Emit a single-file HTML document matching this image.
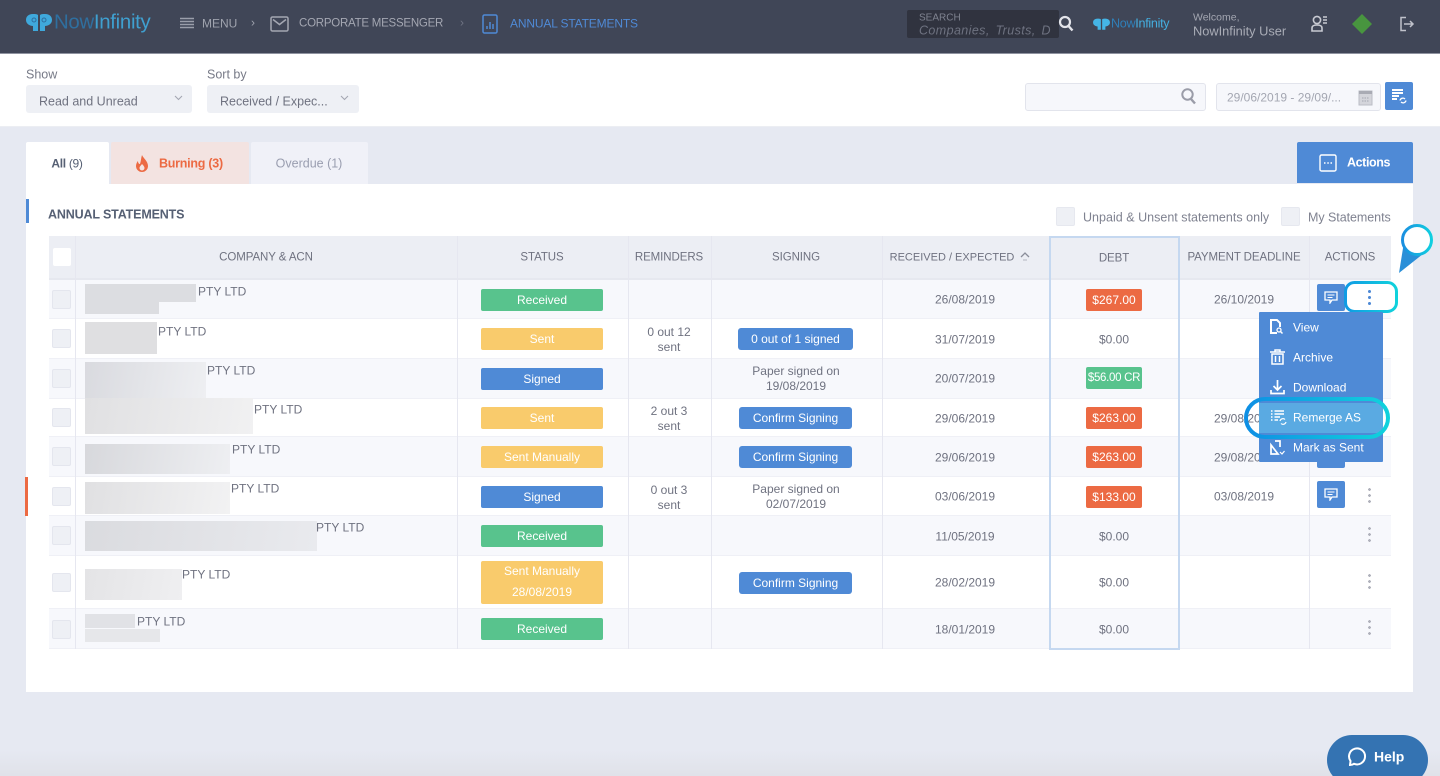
<!DOCTYPE html>
<html><head><meta charset="utf-8"><title>Annual Statements</title>
<style>
html,body{margin:0;padding:0}
body{width:1440px;height:776px;overflow:hidden;background:#e6e9f2;font-family:"Liberation Sans",sans-serif;font-size:12px;color:#6f7280;position:relative}
#w{position:absolute;left:0;top:0;width:1440px;height:776px;overflow:hidden;filter:blur(.35px)}
#w div,#w span,#w svg{position:absolute}
.c{transform:translate(-50%,calc(-50% + 2px));white-space:nowrap;text-align:center;line-height:15px}
.l{transform:translateY(calc(-50% + 2px));white-space:nowrap;line-height:15px}
.r{left:49px;width:1342px;border-bottom:1px solid #eff0f6}
.v{top:236px;width:1px;height:413px;background:#e6e7f0}
.cb{left:52px;width:19px;height:19px;background:#eef0f5;border:1px solid #e4e6ee;border-radius:2px;box-sizing:border-box}
.b{left:481px;width:122px;height:22px;border-radius:2px;color:#fff;line-height:22px;text-align:center;font-size:12px}
.g{background:#58c38d}.y{background:#f9cb6c}.bl{background:#4f8ad6}.re{background:#ec6a43}
.s{height:22px;background:#4f8ad6;border-radius:3px;color:#fff;text-align:center;line-height:22px;font-size:12px}
.d{left:1086px;width:56px;height:22px;border-radius:2px;color:#fff;text-align:center;line-height:22px;font-size:12px;white-space:nowrap}
.h{font-size:11.5px;color:#6f7280;letter-spacing:-.08px}
.cm{left:1317px;width:28px;height:27px;background:#4f8ad6;border-radius:2px}
.dots{width:3px;height:15px;background:radial-gradient(circle at 1.5px 1.5px,#b0b2bc 1.3px,transparent 1.5px) 0 0/3px 6px repeat-y}
.mi{color:#fff;font-size:12px;left:1293px}
</style></head><body><div id="w">

<!-- top bar -->
<div style="left:0;top:0;width:1440px;height:53px;background:#404657;border-bottom:1px solid #8f93a0"></div>
<svg style="left:26px;top:13px" width="26" height="20" viewBox="0 0 26 20"><path d="M7 1C2 1 0 4 0 7c0 4 4 6 7 6v5h5V2C11 1 9 1 7 1zM19 1c5 0 7 3 7 6 0 4-4 6-7 6v5h-5V2c1-1 3-1 5-1z" fill="#3fa9dc"/><circle cx="8" cy="7" r="2" fill="none" stroke="#2f6f9f"/><circle cx="18" cy="7" r="2" fill="none" stroke="#2f6f9f"/></svg>
<div class="l" style="left:54px;top:21px;font-size:20.4px;color:#2f6f9f;letter-spacing:-.3px">Now<span style="position:static;color:#3fa0d0">Infinity</span></div>
<svg style="left:180px;top:17px" width="14" height="13"><path d="M0 1.5h14M0 4.5h14M0 7.5h14M0 10.5h14" stroke="#9a9eaa" stroke-width="1.4"/></svg>
<div class="l" style="left:202px;top:22px;color:#9fa3ae;font-size:12px">MENU</div>
<div class="c" style="left:253px;top:21px;color:#9fa3ae;font-size:12px">›</div>
<svg style="left:270px;top:16px" width="19" height="16" viewBox="0 0 19 16"><rect x="1" y="1" width="17" height="14" rx="1.5" fill="none" stroke="#a4a7b2" stroke-width="1.5"/><path d="M3 3.5l6.5 5 6.5-5" fill="none" stroke="#a4a7b2" stroke-width="1.5"/></svg>
<div class="l" style="left:299px;top:22px;color:#a4a7b2;font-size:11.5px;letter-spacing:-.24px">CORPORATE MESSENGER</div>
<div class="c" style="left:462px;top:21px;color:#6f7484;font-size:12px">›</div>
<svg style="left:482px;top:14px" width="16" height="20" viewBox="0 0 16 20"><rect x="1" y="1" width="14" height="18" rx="1.5" fill="none" stroke="#4f8ad6" stroke-width="1.5"/><path d="M5 15v-3M8 15V8M11 15v-5" stroke="#4f8ad6" stroke-width="1.5"/></svg>
<div class="l" style="left:510px;top:22px;color:#4f8ad6;font-size:12px;letter-spacing:-.15px">ANNUAL STATEMENTS</div>

<div style="left:907px;top:10px;width:152px;height:28px;background:#30333f;border-radius:2px"></div>
<div class="l" style="left:919px;top:16px;font-size:10px;color:#7f8390">SEARCH</div>
<div class="l" style="left:919px;top:29px;font-size:12.5px;font-style:italic;color:#6e7280;letter-spacing:.4px;word-spacing:2px;width:132px;overflow:hidden">Companies, Trusts, D</div>
<svg style="left:1058px;top:15px" width="16" height="17" viewBox="0 0 16 17"><circle cx="7" cy="7" r="5" fill="none" stroke="#e3e4ea" stroke-width="2.2"/><path d="M10.5 11l4 4.5" stroke="#e3e4ea" stroke-width="2.4"/></svg>
<svg style="left:1093px;top:18px" width="17" height="13" viewBox="0 0 26 20"><path d="M7 1C2 1 0 4 0 7c0 4 4 6 7 6v5h5V2C11 1 9 1 7 1zM19 1c5 0 7 3 7 6 0 4-4 6-7 6v5h-5V2c1-1 3-1 5-1z" fill="#45b5e6"/></svg>
<div class="l" style="left:1111px;top:22px;font-size:12.6px;color:#2f7fb8;letter-spacing:-.3px">Now<span style="position:static;color:#44aee0">Infinity</span></div>
<div class="l" style="left:1193px;top:16px;font-size:10.5px;color:#a4a7b2">Welcome,</div>
<div class="l" style="left:1193px;top:29px;font-size:12.8px;color:#a9acb6">NowInfinity User</div>
<svg style="left:1311px;top:14px" width="17" height="19" viewBox="0 0 17 19"><circle cx="6" cy="6" r="3.6" fill="none" stroke="#c8cad2" stroke-width="1.6"/><path d="M1 17v-3c0-2 2-3 5-3s5 1 5 3v3z" fill="none" stroke="#c8cad2" stroke-width="1.6"/><path d="M12 3h4M12 6h4M12 9h4" stroke="#c8cad2" stroke-width="1.5"/></svg>
<div style="left:1352px;top:14px;width:20px;height:20px;background:#48953f;clip-path:polygon(50% 0,100% 50%,50% 100%,0 50%)"></div>
<svg style="left:1399px;top:16px" width="16" height="16" viewBox="0 0 16 16"><path d="M7 1.5H2v13h5" fill="none" stroke="#c0c2cb" stroke-width="1.5"/><path d="M5 8h9M11 5l3 3-3 3" fill="none" stroke="#c0c2cb" stroke-width="1.5"/></svg>

<!-- filter bar -->
<div style="left:0;top:54px;width:1440px;height:72px;background:#fff;border-bottom:1px solid #eceef3"></div>
<div class="l" style="left:26px;top:73px;font-size:12.5px;color:#777a87">Show</div>
<div class="l" style="left:207px;top:73px;font-size:12.5px;color:#777a87">Sort by</div>
<div style="left:26px;top:85px;width:166px;height:28px;background:#eef0f5;border-radius:3px"></div>
<div class="l" style="left:39px;top:100px;font-size:12.5px;color:#6f7280">Read and Unread</div>
<svg style="left:174px;top:95px" width="9" height="6"><path d="M1 1l3.5 3.500L8 1" fill="none" stroke="#a4a7b2" stroke-width="1.100"/></svg>
<div style="left:207px;top:85px;width:152px;height:28px;background:#eef0f5;border-radius:3px"></div>
<div class="l" style="left:220px;top:100px;font-size:12.5px;color:#6f7280">Received / Expec...</div>
<svg style="left:340px;top:95px" width="9" height="6"><path d="M1 1l3.5 3.500L8 1" fill="none" stroke="#a4a7b2" stroke-width="1.100"/></svg>

<div style="left:1025px;top:83px;width:181px;height:28px;background:#f6f7fb;border:1px solid #e2e4ec;border-radius:3px;box-sizing:border-box"></div>
<svg style="left:1180px;top:87px" width="17" height="18" viewBox="0 0 17 18"><circle cx="7.500" cy="7.500" r="5.200" fill="none" stroke="#9a9ca8" stroke-width="2"/><path d="M11 12l4 4.500" stroke="#9a9ca8" stroke-width="2.400"/></svg>
<div style="left:1216px;top:83px;width:165px;height:28px;background:#f6f7fb;border:1px solid #e2e4ec;border-radius:3px;box-sizing:border-box"></div>
<div class="l" style="left:1227px;top:96px;font-size:12px;color:#a4a7b2">29/06/2019 - 29/09/...</div>
<svg style="left:1358px;top:90px" width="15" height="16" viewBox="0 0 15 16"><rect x="1" y="1" width="13" height="14" fill="#d4d5db" stroke="#bbbdc6"/><rect x="1" y="1" width="13" height="3" fill="#a9abb4"/><path d="M4 8h7M4 11h7" stroke="#a4a6b0" stroke-dasharray="1.500 1"/></svg>
<div style="left:1385px;top:82px;width:28px;height:28px;background:#4f8ad6;border-radius:2px"></div>
<svg style="left:1391px;top:88px" width="17" height="17" viewBox="0 0 17 17"><path d="M1 2h11M1 5h11M1 8h7M1 11h5" stroke="#fff" stroke-width="2"/><path d="M9 12.500a3 3 0 0 1 5-1.500M15 12.500a3 3 0 0 1-5 1.500" fill="none" stroke="#fff" stroke-width="1.300"/></svg>

<!-- card -->
<div style="left:26px;top:184px;width:1387px;height:508px;background:#fff"></div>
<div style="left:26px;top:142px;width:83px;height:43px;background:#fff;border-radius:2px 2px 0 0"></div>
<div class="c" style="left:67px;top:162px;font-size:12px;color:#566074;font-weight:bold;letter-spacing:-.3px">All <span style="position:static;font-weight:normal">(9)</span></div>
<div style="left:111px;top:142px;width:138px;height:42px;background:#f3e3e1;border-radius:2px 2px 0 0"></div>
<svg style="left:135px;top:155px" width="14" height="17" viewBox="0 0 14 17"><path d="M7 0c1 3 6 6 6 11a6 6 0 0 1-12 0c0-2 1-4 2-5 0 2 1 3 2 3C6 6 6 3 7 0z" fill="#ec6a43"/><path d="M7 9c1 1 2.500 2.500 2.500 4a2.500 2.500 0 0 1-5 0c0-1.500 1.500-2.500 2.500-4z" fill="#f3e3e1"/></svg>
<div class="l" style="left:159px;top:162px;font-size:12.5px;color:#ec6a43;font-weight:bold;letter-spacing:-.25px">Burning (3)</div>
<div style="left:251px;top:142px;width:117px;height:42px;background:#f0f1f8;border-radius:2px 2px 0 0"></div>
<div class="c" style="left:309px;top:162px;font-size:12.5px;color:#9a9eb0">Overdue (1)</div>
<div style="left:1297px;top:142px;width:116px;height:41px;background:#4f8ad6;border-radius:2px 2px 0 0"></div>
<svg style="left:1319px;top:154px" width="18" height="18"><rect x="1" y="1" width="16" height="16" rx="1.500" fill="none" stroke="#fff" stroke-width="1.400"/><path d="M5 9h1.500M8.300 9h1.500M11.500 9H13" stroke="#fff" stroke-width="1.400"/></svg>
<div class="l" style="left:1347px;top:161px;font-size:12.500px;color:#fff;font-weight:bold;letter-spacing:-.4px">Actions</div>

<div style="left:26px;top:199px;width:3px;height:24px;background:#4f8ad6"></div>
<div class="l" style="left:48px;top:213px;font-size:12.500px;font-weight:bold;color:#566074;letter-spacing:-.15px">ANNUAL STATEMENTS</div>
<div style="left:1056px;top:207px;width:19px;height:19px;background:#eef0f5;border:1px solid #e6e8ef;box-sizing:border-box;border-radius:2px"></div>
<div class="l" style="left:1083px;top:216px;font-size:12.500px;color:#7f8290;letter-spacing:.02px">Unpaid &amp; Unsent statements only</div>
<div style="left:1281px;top:207px;width:19px;height:19px;background:#eef0f5;border:1px solid #e6e8ef;box-sizing:border-box;border-radius:2px"></div>
<div class="l" style="left:1308px;top:216px;font-size:12.500px;color:#7f8290;letter-spacing:-.05px">My Statements</div>

<!-- table bg -->
<div class="r" style="top:236px;height:42px;background:#eceef4;border-bottom:2px solid #e6e8ef"></div>
<div class="r" style="top:280px;height:38px;background:#f7f8fc"></div>
<div class="r" style="top:319px;height:39px;background:#fff"></div>
<div class="r" style="top:359px;height:39px;background:#f7f8fc"></div>
<div class="r" style="top:399px;height:37px;background:#fff"></div>
<div class="r" style="top:437px;height:39px;background:#f7f8fc"></div>
<div class="r" style="top:477px;height:38px;background:#fff"></div>
<div class="r" style="top:516px;height:39px;background:#f7f8fc"></div>
<div class="r" style="top:556px;height:52px;background:#fff"></div>
<div class="r" style="top:609px;height:39px;background:#f7f8fc"></div>
<div class="v" style="left:75px"></div><div class="v" style="left:457px"></div><div class="v" style="left:628px"></div><div class="v" style="left:711px"></div><div class="v" style="left:882px"></div><div class="v" style="left:1309px"></div>
<div style="left:1049px;top:236px;width:131px;height:414px;border:2px solid #c5d8f0;box-sizing:border-box"></div>

<!-- headers -->
<div class="c h" style="left:266px;top:256px">COMPANY &amp; ACN</div>
<div class="c h" style="left:542px;top:256px">STATUS</div>
<div class="c h" style="left:669px;top:256px">REMINDERS</div>
<div class="c h" style="left:796px;top:256px">SIGNING</div>
<div class="c h" style="left:952px;top:256px;font-size:11px;letter-spacing:0">RECEIVED / EXPECTED</div>
<svg style="left:1020px;top:252px" width="10" height="9"><path d="M1 5l4-4 4 4" fill="none" stroke="#8a8d9a" stroke-width="1.300"/><path d="M3 8h4" stroke="#b5b7c0"/></svg>
<div class="c h" style="left:1114px;top:257px">DEBT</div>
<div class="c h" style="left:1244px;top:256px">PAYMENT DEADLINE</div>
<div class="c h" style="left:1350px;top:256px">ACTIONS</div>

<div style="left:53px;top:248px;width:18px;height:18px;background:#fff;border-radius:2px"></div>
<div class="cb" style="top:290px"></div><div class="cb" style="top:329px"></div><div class="cb" style="top:369px"></div><div class="cb" style="top:408px"></div><div class="cb" style="top:447px"></div><div class="cb" style="top:487px"></div><div class="cb" style="top:526px"></div><div class="cb" style="top:573px"></div><div class="cb" style="top:620px"></div>

<div style="left:25px;top:477px;width:3px;height:39px;background:#ec6a43"></div>

<!-- redacted blocks -->
<div style="left:85px;top:284px;width:111px;height:18px;background:#dcdde1"></div>
<div style="left:85px;top:302px;width:74px;height:12px;background:#dcdde1"></div>
<div style="left:85px;top:322px;width:72px;height:32px;background:#dfdfe1"></div>
<div style="left:85px;top:362px;width:121px;height:36px;background:linear-gradient(100deg,#d9dadf,#eeeff2)"></div>
<div style="left:85px;top:398px;width:168px;height:36px;background:linear-gradient(100deg,#e0e0e2,#f1f1f2)"></div>
<div style="left:85px;top:444px;width:145px;height:30px;background:linear-gradient(100deg,#d7d8dc,#eeeff2)"></div>
<div style="left:85px;top:482px;width:145px;height:32px;background:linear-gradient(100deg,#e0e0e2,#f2f2f3)"></div>
<div style="left:85px;top:521px;width:232px;height:30px;background:linear-gradient(100deg,#dadbdf,#e9eaee)"></div>
<div style="left:85px;top:569px;width:97px;height:31px;background:linear-gradient(100deg,#e4e4e6,#efeff1)"></div>
<div style="left:85px;top:614px;width:50px;height:14px;background:#e1e2e6"></div>
<div style="left:85px;top:629px;width:75px;height:13px;background:#e6e7ea"></div>

<div class="l" style="left:198px;top:290px">PTY LTD</div>
<div class="l" style="left:158px;top:330px">PTY LTD</div>
<div class="l" style="left:207px;top:369px">PTY LTD</div>
<div class="l" style="left:254px;top:408px">PTY LTD</div>
<div class="l" style="left:232px;top:448px">PTY LTD</div>
<div class="l" style="left:231px;top:487px">PTY LTD</div>
<div class="l" style="left:316px;top:526px">PTY LTD</div>
<div class="l" style="left:182px;top:573px">PTY LTD</div>
<div class="l" style="left:137px;top:620px">PTY LTD</div>

<!-- status -->
<div class="b g" style="top:289px">Received</div>
<div class="b y" style="top:328px">Sent</div>
<div class="b bl" style="top:368px">Signed</div>
<div class="b y" style="top:407px">Sent</div>
<div class="b y" style="top:446px">Sent Manually</div>
<div class="b bl" style="top:486px">Signed</div>
<div class="b g" style="top:525px">Received</div>
<div class="b y" style="top:561px;height:43px;line-height:21px">Sent Manually<br>28/08/2019</div>
<div class="b g" style="top:618px">Received</div>

<!-- reminders -->
<div class="c" style="left:669px;top:338px">0 out 12<br>sent</div>
<div class="c" style="left:669px;top:417px">2 out 3<br>sent</div>
<div class="c" style="left:669px;top:496px">0 out 3<br>sent</div>

<!-- signing -->
<div class="s" style="left:738px;top:328px;width:115px">0 out of 1 signed</div>
<div class="c" style="left:796px;top:377px">Paper signed on<br>19/08/2019</div>
<div class="s" style="left:739px;top:407px;width:113px">Confirm Signing</div>
<div class="s" style="left:739px;top:446px;width:113px">Confirm Signing</div>
<div class="c" style="left:796px;top:495px">Paper signed on<br>02/07/2019</div>
<div class="s" style="left:739px;top:572px;width:113px">Confirm Signing</div>

<!-- dates -->
<div class="c" style="left:965px;top:298px">26/08/2019</div>
<div class="c" style="left:965px;top:338px">31/07/2019</div>
<div class="c" style="left:965px;top:377px">20/07/2019</div>
<div class="c" style="left:965px;top:417px">29/06/2019</div>
<div class="c" style="left:965px;top:456px">29/06/2019</div>
<div class="c" style="left:965px;top:495px">03/06/2019</div>
<div class="c" style="left:965px;top:535px">11/05/2019</div>
<div class="c" style="left:965px;top:581px">28/02/2019</div>
<div class="c" style="left:965px;top:628px">18/01/2019</div>

<!-- debt -->
<div class="d re" style="top:289px">$267.00</div>
<div class="c" style="left:1114px;top:338px">$0.00</div>
<div class="d g" style="top:367px;font-size:11.5px;letter-spacing:-.3px">$56.00 CR</div>
<div class="d re" style="top:407px">$263.00</div>
<div class="d re" style="top:446px">$263.00</div>
<div class="d re" style="top:486px">$133.00</div>
<div class="c" style="left:1114px;top:535px">$0.00</div>
<div class="c" style="left:1114px;top:581px">$0.00</div>
<div class="c" style="left:1114px;top:628px">$0.00</div>

<!-- deadline -->
<div class="c" style="left:1244px;top:298px">26/10/2019</div>
<div class="c" style="left:1244px;top:417px">29/08/2019</div>
<div class="c" style="left:1244px;top:456px">29/08/2019</div>
<div class="c" style="left:1244px;top:495px">03/08/2019</div>

<!-- actions -->
<div class="cm" style="top:284px"></div>
<svg style="left:1324px;top:291px" width="14" height="13" viewBox="0 0 14 13"><path d="M1 1h12v8H8l-2 3V9H1z" fill="none" stroke="#fff" stroke-width="1.300"/><path d="M3.500 4h7M3.500 6.500h5" stroke="#fff"/></svg>
<div class="cm" style="top:440px;height:28px"></div>
<div class="cm" style="top:481px"></div>
<svg style="left:1324px;top:488px" width="14" height="13" viewBox="0 0 14 13"><path d="M1 1h12v8H8l-2 3V9H1z" fill="none" stroke="#fff" stroke-width="1.300"/><path d="M3.500 4h7M3.500 6.500h5" stroke="#fff"/></svg>
<div class="dots" style="left:1368px;top:488px"></div>
<div class="dots" style="left:1368px;top:527px"></div>
<div class="dots" style="left:1368px;top:574px"></div>
<div class="dots" style="left:1368px;top:620px"></div>

<!-- highlighted kebab -->
<svg style="left:1343px;top:280px" width="56" height="34" viewBox="0 0 56 34"><defs><linearGradient id="k" x1="0" y1="0" x2="1" y2="0"><stop offset="0" stop-color="#109be4"/><stop offset="1" stop-color="#10d2dc"/></linearGradient></defs><rect x="2.500" y="2.500" width="51" height="29" rx="9" fill="#fff" stroke="url(#k)" stroke-width="3"/></svg>
<div class="dots" style="left:1368px;top:290px;background-image:radial-gradient(circle at 1.500px 1.500px,#4f8ad6 1.400px,transparent 1.600px)"></div>

<!-- menu -->
<div style="left:1259px;top:312px;width:124px;height:150px;background:#4f8ad6;border-radius:1px"></div>
<div style="left:1259px;top:403px;width:124px;height:30px;background:#5aaae2"></div>
<svg style="left:1269px;top:319px" width="15" height="16" viewBox="0 0 15 16"><path d="M8 14H2V1h6l3 3v4" fill="none" stroke="#fff" stroke-width="2"/><circle cx="10" cy="11" r="2" fill="none" stroke="#fff" stroke-width="1.300"/><path d="M11.500 12.500l2 2" stroke="#fff" stroke-width="1.500"/></svg>
<div class="l mi" style="top:326px">View</div>
<svg style="left:1270px;top:349px" width="15" height="16" viewBox="0 0 15 16"><path d="M0 3h15M5 3V1h5v2" fill="none" stroke="#fff" stroke-width="1.500"/><path d="M2 5h11v10H2zM5.500 7v6M9.500 7v6" fill="none" stroke="#fff" stroke-width="1.500"/></svg>
<div class="l mi" style="top:356px">Archive</div>
<svg style="left:1270px;top:379px" width="15" height="16" viewBox="0 0 15 16"><path d="M7.500 1v9M3.500 7l4 4 4-4" fill="none" stroke="#fff" stroke-width="1.700"/><path d="M1 11v3.500h13V11" fill="none" stroke="#fff" stroke-width="1.700"/></svg>
<div class="l mi" style="top:386px">Download</div>

<!-- remerge highlight -->
<svg style="left:1243px;top:396px" width="148" height="44" viewBox="0 0 148 44"><defs><linearGradient id="rg" x1="0" y1="0" x2="1" y2="0"><stop offset="0" stop-color="#0e8fe4"/><stop offset="1" stop-color="#10d2dc"/></linearGradient></defs><rect x="3" y="3" width="142" height="38" rx="19" fill="none" stroke="url(#rg)" stroke-width="4"/></svg>
<svg style="left:1270px;top:409px" width="17" height="17" viewBox="0 0 17 17"><path d="M1 2h1.500M1 5h1.500M1 8h1.500M1 11h1.500M4.500 2H14M4.500 5H14M4.500 8H10M4.500 11H8" stroke="#fff" stroke-width="1.500"/><path d="M10 12a3 3 0 0 1 5-1.500M16 13a3 3 0 0 1-5 1.500" fill="none" stroke="#fff" stroke-width="1.200"/></svg>
<div class="l mi" style="top:416px">Remerge AS</div>
<svg style="left:1270px;top:440px" width="15" height="16" viewBox="0 0 15 16"><path d="M5 1h5v6M8 14H1V5z" fill="none" stroke="#fff" stroke-width="1.700"/><path d="M10 12l2 2 2.500-3" fill="none" stroke="#fff" stroke-width="1.200"/></svg>
<div class="l mi" style="top:446px">Mark as Sent</div>

<!-- pin -->
<svg style="left:1396px;top:222px" width="40" height="54" viewBox="0 0 40 54"><defs><linearGradient id="p" x1="0" y1="0" x2="1" y2="0"><stop offset="0" stop-color="#1a8fe0"/><stop offset="1" stop-color="#10cfe0"/></linearGradient></defs><path d="M3 51L8 20 32 28z" fill="#2a8fd8"/><circle cx="21" cy="18" r="14.500" fill="#fff" stroke="url(#p)" stroke-width="3"/></svg>

<!-- help -->
<div style="left:0;top:750px;width:1440px;height:26px;background:linear-gradient(#e6e9f2,#e0e2e9)"></div>
<div style="left:1327px;top:735px;width:101px;height:50px;background:#3473b2;border-radius:25px"></div>
<svg style="left:1347px;top:747px" width="20" height="20" viewBox="0 0 20 20"><path d="M3 18c2 0 3-.5 4-1.200A8 8 0 1 0 3.500 14c0 1.500-.5 3-.5 4z" fill="none" stroke="#fff" stroke-width="2"/></svg>
<div class="l" style="left:1374px;top:755px;color:#fff;font-weight:bold;font-size:14px">Help</div>
</div></body></html>
